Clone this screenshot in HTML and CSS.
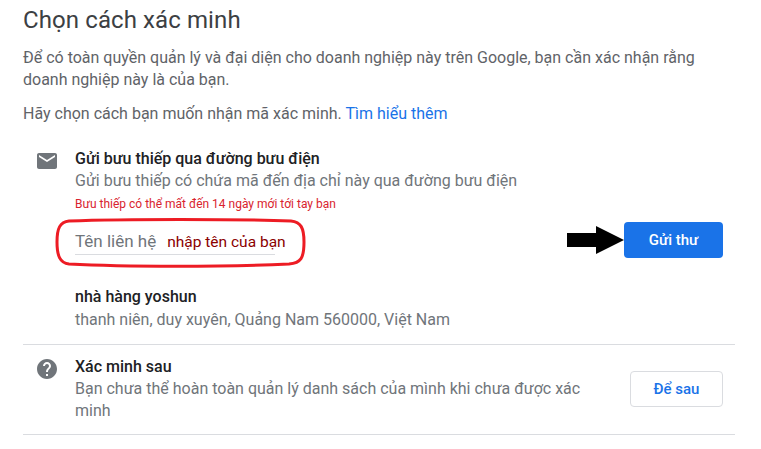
FILE: index.html
```html
<!DOCTYPE html>
<html lang="vi">
<head>
    <meta charset="UTF-8">
    <meta name="viewport" content="width=device-width, initial-scale=1.0">
    <link rel="stylesheet" href="styles.css">
</head>
<body>
    <div class="container">
        <h1 class="title">Chọn cách xác minh</h1>
        <p class="intro">Để có toàn quyền quản lý và đại diện cho doanh nghiệp này trên Google, bạn cần xác nhận rằng doanh nghiệp này là của bạn.</p>
        <p class="choose">Hãy chọn cách bạn muốn nhận mã xác minh. <a class="link" href="#">Tìm hiểu thêm</a></p>

        <div class="option option-mail">
            <svg class="icon" viewBox="0 0 24 24" fill="#70757a">
                <path d="M20 4H4c-1.100 0-1.990.9-1.990 2L2 18c0 1.100.9 2 2 2h16c1.100 0 2-.9 2-2V6c0-1.100-.9-2-2-2zm0 4l-8 5-8-5V6l8 5 8-5v2z"/>
            </svg>
            <div class="option-body">
                <div class="option-title">Gửi bưu thiếp qua đường bưu điện</div>
                <div class="option-text">Gửi bưu thiếp có chứa mã đến địa chỉ này qua đường bưu điện</div>
                <div class="warning">Bưu thiếp có thể mất đến 14 ngày mới tới tay bạn</div>
                <div class="send-row">
                    <div class="contact">
                        <span class="contact-label">Tên liên hệ</span>
                        <span class="contact-value">nhập tên của bạn</span>
                        <svg class="ring" viewBox="0 0 251 50" fill="none">
                            <path d="M14 3C70 1 180 1 236 3C246 4 249 10 249 24C249 40 246 45 234 46C170 49 70 49 14 46C5 45 2 38 2 24C2 10 5 4 14 3Z" stroke="#ed1c24" stroke-width="3"/>
                        </svg>
                    </div>
                    <svg class="arrow" viewBox="0 0 57 28" fill="#000">
                        <path d="M0 7H29V0L57 14L29 28V21H0Z"/>
                    </svg>
                    <button class="btn btn-primary">Gửi thư</button>
                </div>
                <div class="option-title business">nhà hàng yoshun</div>
                <div class="option-text address">thanh niên, duy xuyên, Quảng Nam 560000, Việt Nam</div>
            </div>
        </div>

        <div class="option option-later">
            <svg class="icon" viewBox="0 0 24 24" fill="#70757a">
                <path d="M12 2C6.480 2 2 6.480 2 12s4.480 10 10 10 10-4.480 10-10S17.520 2 12 2zm1 17h-2v-2h2v2zm2.070-7.750l-.9.920C13.450 12.900 13 13.500 13 15h-2v-.5c0-1.100.450-2.100 1.170-2.830l1.240-1.260c.370-.360.590-.860.590-1.410 0-1.100-.9-2-2-2s-2 .9-2 2H8c0-2.210 1.790-4 4-4s4 1.790 4 4c0 .880-.360 1.680-.930 2.250z"/>
            </svg>
            <div class="option-body later-body">
                <div class="later-text">
                    <div class="option-title">Xác minh sau</div>
                    <div class="option-text">Bạn chưa thể hoàn toàn quản lý danh sách của mình khi chưa được xác minh</div>
                </div>
                <button class="btn btn-outline">Để sau</button>
            </div>
        </div>
    </div>
</body>
</html>
```

FILE: styles.css
```css
body {
    margin: 0;
    font-family: 'Roboto', 'Liberation Sans', sans-serif;
    background: white;
    color: #202124;
}
.container {
    width: 712px;
    margin-left: 23px;
    padding-top: 6px;
}
.title {
    margin: 0;
    font-size: 24px;
    font-weight: 400;
    line-height: 28px;
    letter-spacing: 0.1px;
    color: #3c4043;
}
.intro, .choose {
    margin: 0;
    font-size: 16px;
    line-height: 22px;
    color: #5f6368;
}
.intro {
    margin-top: 13px;
}
.choose {
    margin-top: 12px;
}
.link {
    color: #1a73e8;
    text-decoration: none;
}
.option {
    display: flex;
    border-bottom: 1px solid #dadce0;
}
.option-mail {
    margin-top: 23px;
    padding-bottom: 13px;
}
.option-later {
    padding: 11px 0 12px;
}
.icon {
    width: 24px;
    height: 24px;
    margin: 1px 16px 0 12px;
    flex-shrink: 0;
}
.option-body {
    flex: 1;
}
.option-title {
    font-size: 16px;
    font-weight: 500;
    line-height: 22px;
    color: #202124;
}
.option-text {
    font-size: 16px;
    line-height: 22px;
    color: #70757a;
}
.warning {
    margin-top: 5px;
    font-size: 12px;
    line-height: 14px;
    color: #d9232e;
}
.send-row {
    display: flex;
    align-items: center;
    margin-top: 11px;
    margin-right: 12px;
}
.contact {
    position: relative;
    box-sizing: border-box;
    width: 200px;
    height: 30px;
    padding-bottom: 3px;
    display: flex;
    align-items: flex-end;
    border-bottom: 1px solid #dadce0;
}
.contact-label {
    font-size: 17px;
    color: #70757a;
    white-space: nowrap;
}
.contact-value {
    margin-left: 11px;
    font-size: 15.5px;
    color: #8b0000;
    white-space: nowrap;
}
.ring {
    position: absolute;
    left: -20px;
    top: -7px;
    width: 251px;
    height: 50px;
}
.arrow {
    width: 57px;
    height: 28px;
    margin-left: auto;
}
.btn {
    font-family: inherit;
    font-size: 15px;
    font-weight: 500;
    border-radius: 4px;
}
.btn-primary {
    width: 99px;
    height: 36px;
    background: #1a73e8;
    color: white;
    border: none;
}
.business {
    margin-top: 28px;
}
.address {
    margin-top: 1px;
}
.later-body {
    display: flex;
    align-items: center;
    justify-content: space-between;
    padding-right: 12px;
}
.later-text {
    width: 515px;
}
.btn-outline {
    width: 93px;
    height: 36px;
    background: white;
    color: #1a73e8;
    border: 1px solid #dadce0;
}
```
